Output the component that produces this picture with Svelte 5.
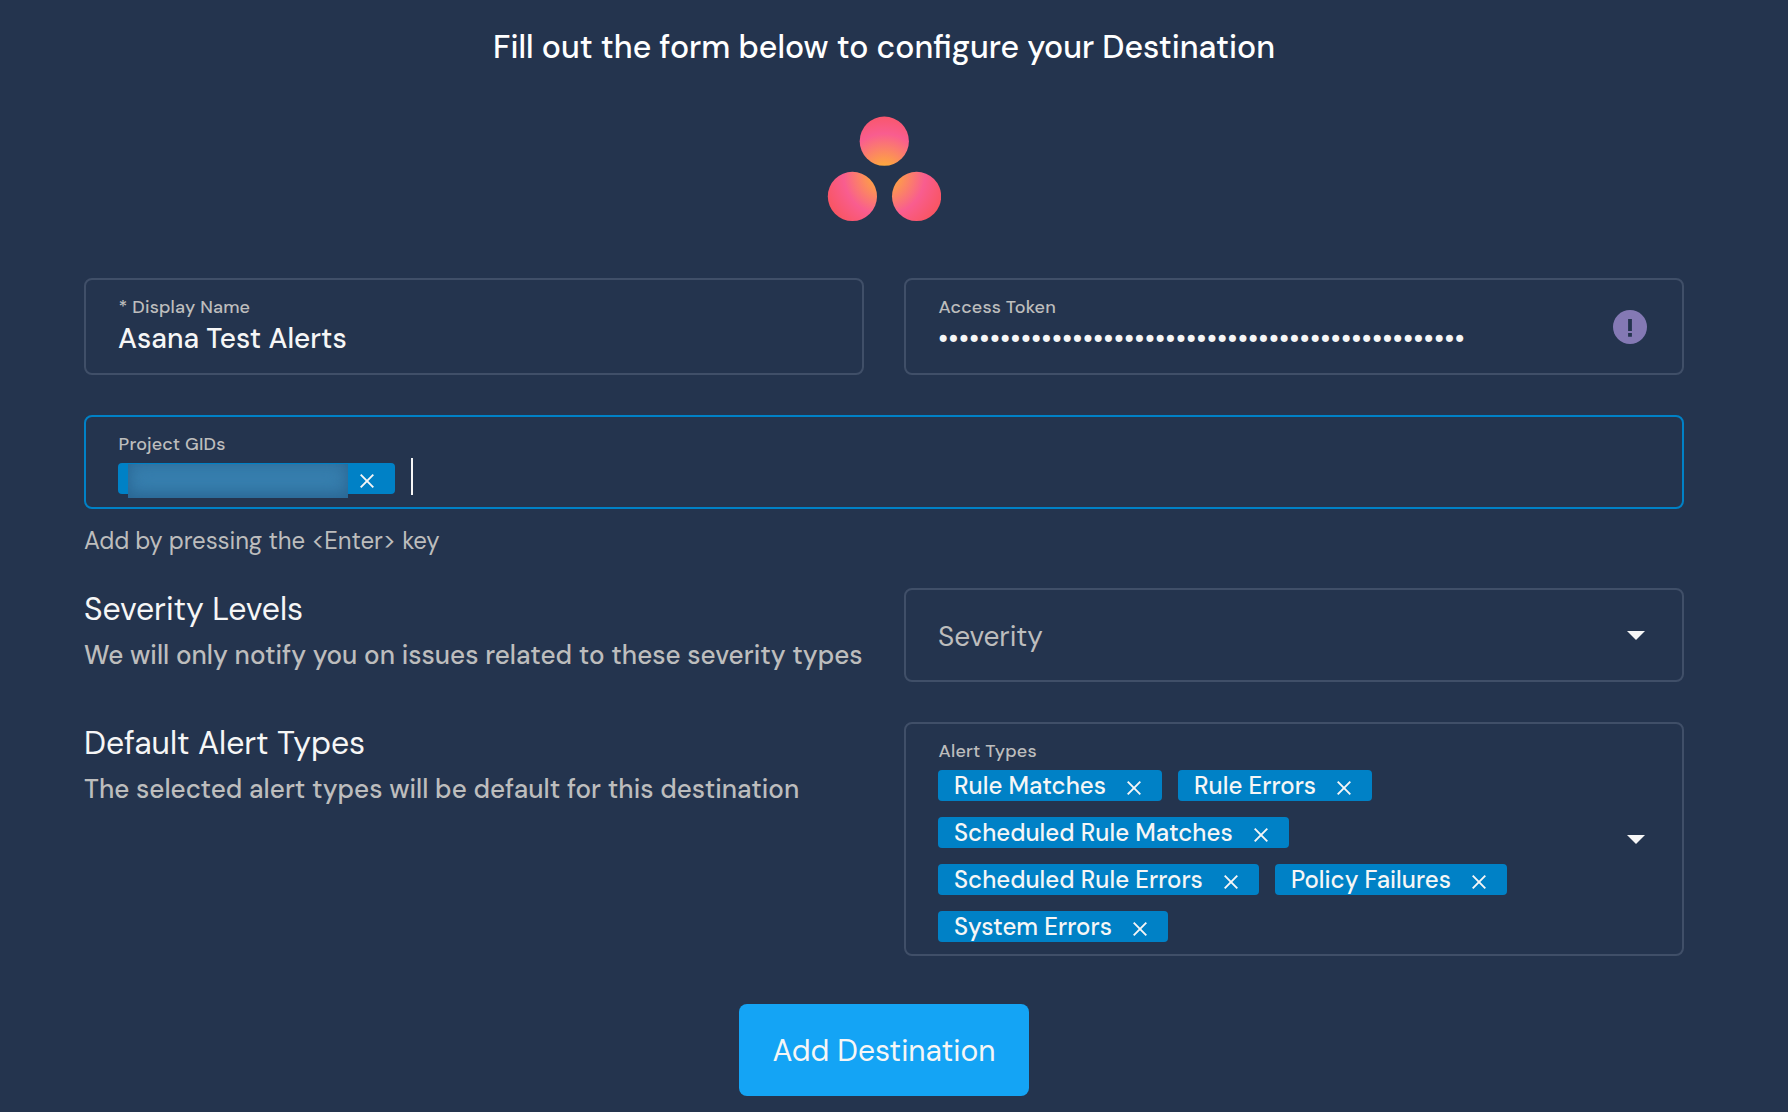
<script>
  const alertTypes = [
    'Rule Matches',
    'Rule Errors',
    'Scheduled Rule Matches',
    'Scheduled Rule Errors',
    'Policy Failures',
    'System Errors'
  ];
  const token = '•'.repeat(51);
</script>

{#snippet closeIcon()}
  <svg class="close" viewBox="0 0 14 14" aria-hidden="true">
    <path d="M.7.7 13.3 13.3M13.3.7.7 13.3" />
  </svg>
{/snippet}

{#snippet caret()}
  <svg class="caret" viewBox="0 0 18 9" aria-hidden="true"><path d="M0 0h18L9 9z" /></svg>
{/snippet}

<main>
  <h1>Fill out the form below to configure your Destination</h1>

  <svg class="logo" viewBox="0 0 114 106" aria-hidden="true">
    <defs>
      <radialGradient id="glow" gradientUnits="userSpaceOnUse" cx="57.3" cy="58.5" r="68">
        <stop offset="0" stop-color="#ffb52e" />
        <stop offset=".13" stop-color="#fea83d" />
        <stop offset=".6" stop-color="#f95d8f" />
        <stop offset="1" stop-color="#f95359" />
      </radialGradient>
    </defs>
    <g fill="url(#glow)">
      <circle cx="57.3" cy="25.2" r="24.6" />
      <circle cx="25.4" cy="80.4" r="24.6" />
      <circle cx="89.6" cy="80.4" r="24.6" />
    </g>
  </svg>

  <form>
    <div class="row">
      <div class="field text">
        <span class="label">* Display Name</span>
        <span class="value">Asana Test Alerts</span>
      </div>
      <div class="field text with-icon">
        <div>
          <span class="label">Access Token</span>
          <span class="value token">{token}</span>
        </div>
        <svg class="info" viewBox="0 0 34 34" aria-hidden="true">
          <circle cx="17" cy="17" r="17" fill="#8479b4" />
          <path d="M15.1 8.9h3.8v12.2h-3.8zM15.1 23.1h3.8v3.6h-3.8z" fill="#24344e" />
        </svg>
      </div>
    </div>

    <div class="field project">
      <span class="label">Project GIDs</span>
      <div class="tags">
        <span class="tag redacted"><span class="mask"></span>{@render closeIcon()}</span>
        <span class="cursor"></span>
      </div>
    </div>
    <p class="helper">Add by pressing the &lt;Enter&gt; key</p>

    <div class="row severity">
      <div class="info-text">
        <h2>Severity Levels</h2>
        <p>We will only notify you on issues related to these severity types</p>
      </div>
      <div class="field select">
        <span class="placeholder">Severity</span>
        {@render caret()}
      </div>
    </div>

    <div class="row alerts">
      <div class="info-text">
        <h2>Default Alert Types</h2>
        <p>The selected alert types will be default for this destination</p>
      </div>
      <div class="field select multi">
        <div class="content">
          <span class="label">Alert Types</span>
          <div class="tags">
            {#each alertTypes as type}
              <span class="tag">{type}{@render closeIcon()}</span>
            {/each}
          </div>
        </div>
        {@render caret()}
      </div>
    </div>

    <button type="button">Add Destination</button>
  </form>
</main>

<style>
  :global(body) {
    margin: 0;
    background: #24344e;
  }
  main {
    box-sizing: border-box;
    width: 1768px;
    height: 1112px;
    overflow: hidden;
    padding: 27px 84px 0;
    display: flex;
    flex-direction: column;
    align-items: center;
    color: #f6f6f6;
    font-family: 'DM Sans', Inter, 'Liberation Sans', sans-serif;
  }
  h1,
  h2,
  p {
    margin: 0;
    white-space: nowrap;
  }
  h1 {
    font-size: 32px;
    line-height: 40px;
    font-weight: 500;
    color: #fff;
  }
  .logo {
    width: 114px;
    height: 106px;
    margin-top: 49px;
  }
  form {
    width: 1600px;
    margin-top: 56px;
    display: flex;
    flex-direction: column;
  }
  .row {
    display: grid;
    grid-template-columns: 780px 780px;
    gap: 40px;
  }
  .field {
    box-sizing: border-box;
    border: 2px solid #404f68;
    border-radius: 8px;
    padding: 17px 32px 0;
  }
  .text {
    height: 97px;
  }
  .with-icon {
    display: flex;
    justify-content: space-between;
  }
  .label {
    display: block;
    padding-left: 0.6px;
    font-size: 18px;
    line-height: 20px;
    font-weight: 500;
    letter-spacing: 0.16px;
    color: #bdbdbd;
  }
  .value {
    display: block;
    margin-top: 4px;
    font-size: 28px;
    line-height: 36px;
    font-weight: 500;
    letter-spacing: 0.03px;
  }
  .token {
    white-space: nowrap;
    letter-spacing: 0;
  }
  .info {
    width: 34px;
    height: 34px;
    margin: 13px 3px 0 0;
  }
  .project {
    height: 94px;
    margin-top: 40px;
    border-color: #0081c6;
  }
  .tags {
    display: flex;
    flex-wrap: wrap;
    gap: 16px;
    margin-top: 9px;
  }
  .tag {
    box-sizing: border-box;
    height: 31px;
    display: flex;
    align-items: center;
    padding: 0 21px 0 16px;
    border-radius: 4px;
    background: #0081c6;
    font-size: 24px;
    line-height: 31px;
    font-weight: 500;
    letter-spacing: 0.03px;
    white-space: nowrap;
  }
  .close {
    width: 14px;
    height: 14px;
    margin: 5px 0 0 21px;
    fill: none;
    stroke: #f6f6f6;
    stroke-width: 1.9;
  }
  .redacted {
    padding-left: 10px;
  }
  .redacted .close {
    margin-left: 12px;
  }
  .mask {
    width: 220px;
    height: 34px;
    margin-top: 5px;
    background: #3880b0;
    box-shadow: inset 0 -4px 14px #28618dcc, inset 0 0 22px #2c6c9b99;
  }
  .cursor {
    width: 2px;
    height: 37px;
    margin: -5px 0 -6px;
    background: #f6f6f6;
  }
  .helper {
    margin-top: 17px;
    font-size: 24px;
    line-height: 30px;
    letter-spacing: -0.1px;
    color: #bdbdbd;
  }
  .severity {
    margin-top: 32px;
  }
  .alerts {
    margin-top: 40px;
  }
  .info-text {
    padding-top: 1px;
  }
  h2 {
    font-size: 32px;
    line-height: 40px;
    font-weight: 400;
    letter-spacing: -0.06px;
  }
  .info-text p {
    margin-top: 9px;
    font-size: 26px;
    line-height: 34px;
    font-weight: 500;
    letter-spacing: 0.03px;
    color: #bdbdbd;
  }
  .select {
    height: 94px;
    padding: 0 37px 0 32px;
    display: flex;
    align-items: center;
    justify-content: space-between;
  }
  .placeholder {
    padding-top: 3px;
    font-size: 28px;
    letter-spacing: -0.05px;
    color: #bdbdbd;
  }
  .caret {
    width: 18px;
    height: 9px;
    fill: #f6f6f6;
  }
  .multi {
    height: 234px;
  }
  .content {
    align-self: flex-start;
    width: 620px;
    padding-top: 17px;
  }
  button {
    align-self: center;
    width: 290px;
    height: 92px;
    margin-top: 48px;
    padding: 1px 0 0;
    border: 0;
    border-radius: 8px;
    background: #14a4f5;
    color: #f6f6f6;
    font-family: inherit;
    font-size: 30px;
    font-weight: 400;
  }
</style>
